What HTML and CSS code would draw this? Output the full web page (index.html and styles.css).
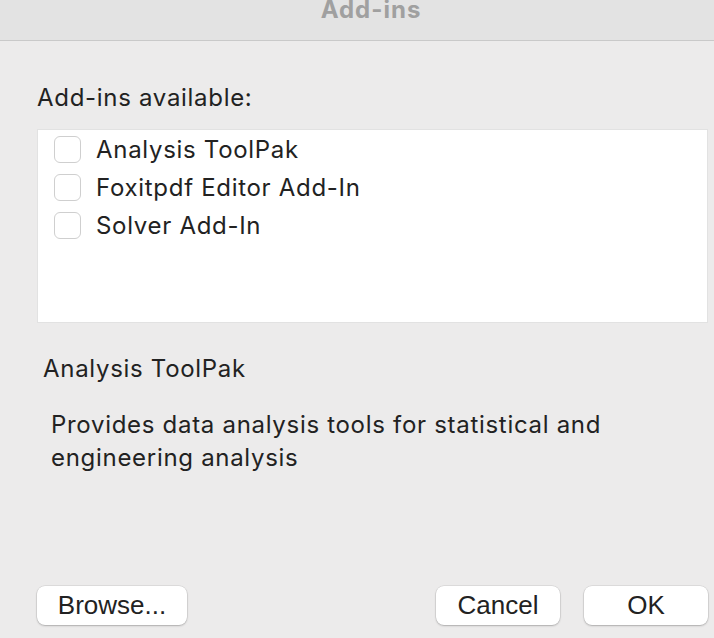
FILE: index.html
```html
<!DOCTYPE html>
<html>
<head>
<meta charset="utf-8">
<link rel="stylesheet" href="styles.css">
</head>
<body>
<div class="window">
  <div class="titlebar"><span class="title">Add-ins</span></div>
  <div class="content">
    <div class="label">Add-ins available:</div>
    <div class="listbox">
      <div class="row"><span class="check"></span><span class="name">Analysis ToolPak</span></div>
      <div class="row"><span class="check"></span><span class="name">Foxitpdf Editor Add-In</span></div>
      <div class="row"><span class="check"></span><span class="name">Solver Add-In</span></div>
    </div>
    <div class="desc-title">Analysis ToolPak</div>
    <div class="desc">Provides data analysis tools for statistical and engineering analysis</div>
    <div class="buttons">
      <button class="btn browse">Browse...</button>
      <div class="spacer"></div>
      <button class="btn cancel">Cancel</button>
      <button class="btn ok">OK</button>
    </div>
  </div>
</div>
</body>
</html>
```
FILE: styles.css
```css
html, body {
  margin: 0;
  padding: 0;
  background: #ecebeb;
  width: 714px;
  height: 638px;
  overflow: hidden;
}
.window {
  width: 714px;
  height: 638px;
  display: flex;
  flex-direction: column;
  font-family: "Inter", "Liberation Sans", sans-serif;
  color: #222222;
  font-size: 24px;
  letter-spacing: 0.7px;
}
.titlebar {
  height: 40px;
  background: #e3e3e3;
  border-bottom: 1px solid #c9c9c9;
  display: flex;
  justify-content: center;
  align-items: flex-start;
}
.title {
  font-weight: 700;
  font-size: 24px;
  line-height: 24px;
  letter-spacing: 1px;
  color: #a0a0a0;
  margin-left: 28px;
  margin-top: -2px;
}
.content {
  flex: 1;
  display: flex;
  flex-direction: column;
  padding: 0 6px 0 37px;
}
.label {
  line-height: 28px;
  margin-top: 43px;
}
.listbox {
  margin-top: 17px;
  height: 194px;
  background: #ffffff;
  border: 1px solid #e2e2e2;
  box-sizing: border-box;
  width: 671px;
}
.row {
  display: flex;
  align-items: center;
  height: 38px;
  padding-left: 16px;
}
.check {
  width: 27px;
  height: 27px;
  box-sizing: border-box;
  border: 1px solid #cfcfcf;
  border-radius: 6px;
  background: #ffffff;
  margin-right: 15px;
}
.desc-title {
  margin-top: 32px;
  margin-left: 6px;
  line-height: 28px;
}
.desc {
  line-height: 33px;
  margin-top: 25px;
  margin-left: 14px;
  width: 590px;
}
.buttons {
  margin-top: auto;
  margin-bottom: 13px;
  display: flex;
  align-items: center;
}
.spacer {
  flex: 1;
}
.btn {
  font-family: "Liberation Sans", "Inter", sans-serif;
  font-size: 26px;
  letter-spacing: 0;
  color: #222222;
  background: #ffffff;
  border: none;
  border-radius: 8px;
  height: 39px;
  box-shadow: 0 0 0 0.5px rgba(0,0,0,0.12), 0 1px 2px rgba(0,0,0,0.22);
  padding: 0;
}
.browse { width: 150px; }
.cancel { width: 124px; margin-right: 24px; }
.ok { width: 124px; }
```
